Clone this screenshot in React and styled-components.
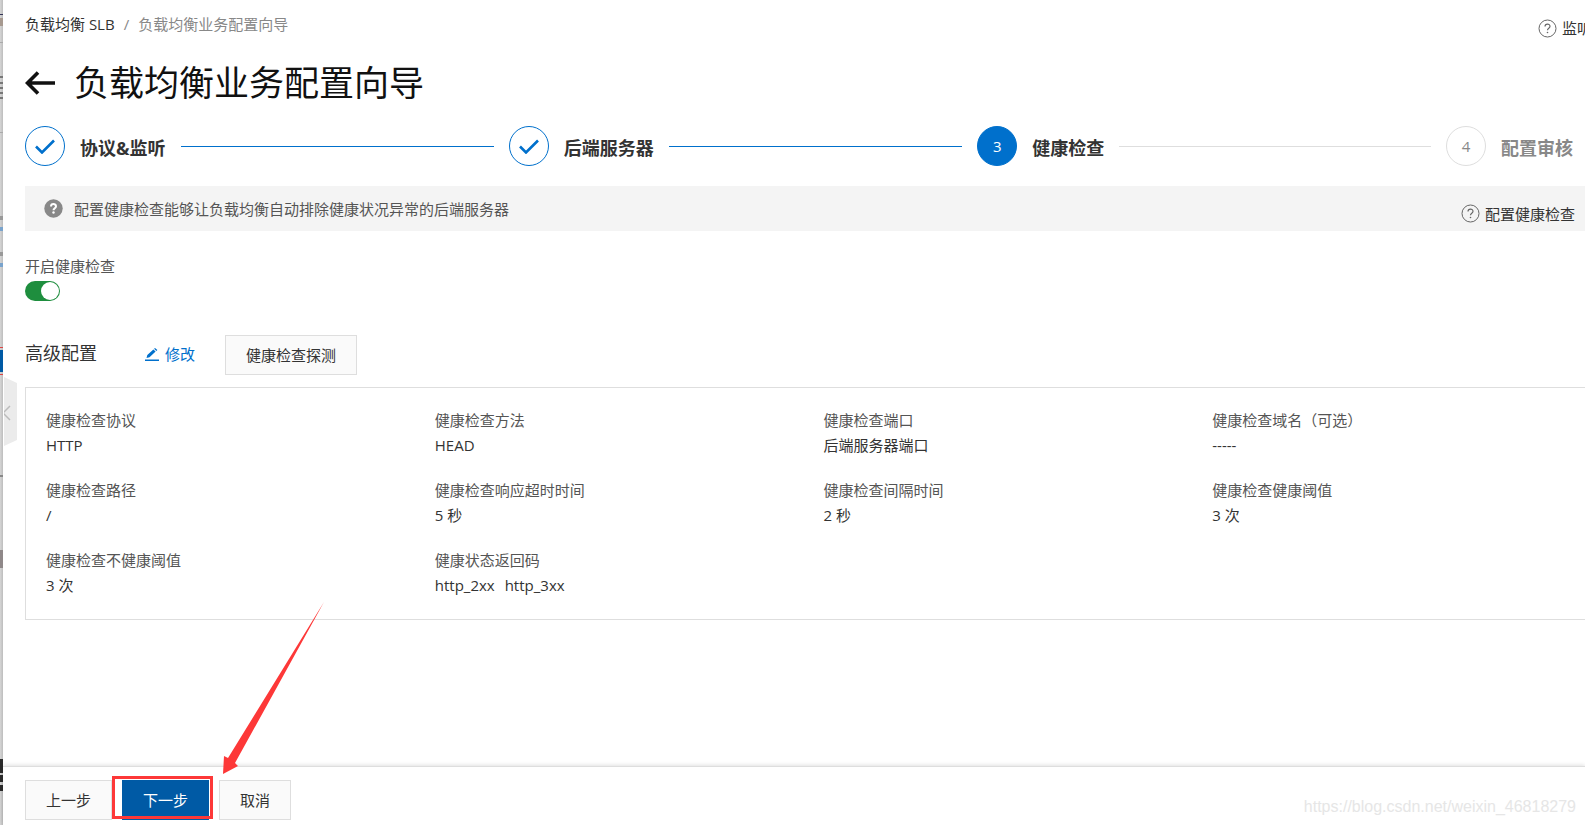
import styled, { createGlobalStyle } from "styled-components";

const GlobalStyle = createGlobalStyle`
  * {
    box-sizing: border-box;
  }

  body {
    margin: 0;
    background: #fff;
    color: #333;
    font-family: "Open Sans", "Noto Sans CJK SC", sans-serif;
    font-size: 15px;
    line-height: 20px;
    overflow: hidden;
  }

  button {
    font: inherit;
  }
`;

const Shell = styled.div`
  position: relative;
  display: flex;
  height: 100vh;
  overflow: hidden;
`;

const Underlay = styled.div`
  flex: none;
  width: 3px;
  background: linear-gradient(to right, #d6d6d6, #bdbdbd);
  display: flex;
  flex-direction: column;
`;

const Mark = styled.span`
  height: ${(props) => props.$height}px;
  margin-top: ${(props) => props.$gap}px;
  background: ${(props) => props.$color};
`;

const Panel = styled.div`
  flex: 1;
  min-width: 0;
  display: flex;
  flex-direction: column;
  background: #fff;
`;

const Content = styled.main`
  flex: 1;
  padding: 14px 0 0 22px;
`;

const TopBar = styled.div`
  display: flex;
  justify-content: space-between;
`;

const Breadcrumb = styled.nav`
  display: flex;
  gap: 9px;
  color: #888;

  a {
    color: #333;
    text-decoration: none;
  }
`;

const HelpLink = styled.a`
  display: flex;
  align-items: center;
  gap: 5px;
  color: #333;
  text-decoration: none;
  white-space: nowrap;

  svg {
    flex: none;
  }
`;

const TopHelp = styled(HelpLink)`
  width: 47px;
  height: 26px;
  padding-top: 2px;
  overflow: hidden;
`;

const TitleRow = styled.div`
  display: flex;
  align-items: center;
  gap: 19px;
  margin-top: 18px;
`;

const BackButton = styled.button`
  display: flex;
  padding: 0;
  border: 0;
  background: none;
`;

const Title = styled.h1`
  margin: 0;
  color: #111;
  font-size: 35px;
  font-weight: 400;
  line-height: 50px;
`;

const Steps = styled.ol`
  display: flex;
  gap: 15px;
  margin: 18px 12px 0 0;
  padding: 0;
  list-style: none;
`;

const Step = styled.li`
  display: flex;
  align-items: center;
  flex: 1 1 0;
  gap: 15px;

  &:first-child {
    flex-basis: 15px;
  }

  &:last-child {
    flex: none;
  }
`;

const StepCircle = styled.span`
  flex: none;
  display: flex;
  align-items: center;
  justify-content: center;
  width: 40px;
  height: 40px;
  border: 1px solid ${(props) => (props.$state === "wait" ? "#dedede" : "#0070cc")};
  border-radius: 50%;
  background: ${(props) => (props.$state === "active" ? "#0070cc" : "#fff")};
  color: ${(props) => (props.$state === "active" ? "#fff" : "#888")};
`;

const StepName = styled.span`
  padding-top: 4px;
  color: ${(props) => (props.$state === "wait" ? "#888" : "#333")};
  font-size: 18px;
  font-weight: 700;
  white-space: nowrap;
`;

const StepLine = styled.span`
  flex: 1;
  height: 1px;
  background: ${(props) => (props.$done ? "#0070cc" : "#dedede")};
`;

const Notice = styled.div`
  display: flex;
  align-items: center;
  gap: 11px;
  height: 45px;
  margin-top: 20px;
  padding: 0 10px 0 19px;
  background: #f4f4f4;
  color: #555;
`;

const NoticeHelp = styled(HelpLink)`
  margin-left: auto;
  padding-top: 10px;
`;

const SwitchField = styled.label`
  display: flex;
  flex-direction: column;
  align-items: flex-start;
  gap: 5px;
  margin-top: 25px;
  color: #555;
`;

const Switch = styled.input`
  appearance: none;
  display: flex;
  justify-content: flex-end;
  width: 35px;
  height: 20px;
  margin: 0;
  padding: 1px;
  border-radius: 10px;
  background: #1e8e3e;

  &::before {
    content: "";
    width: 18px;
    height: 18px;
    border-radius: 50%;
    background: #fff;
  }
`;

const SectionHead = styled.div`
  display: flex;
  align-items: center;
  margin-top: 34px;
`;

const SectionTitle = styled.h2`
  margin: 0 48px 5px 0;
  font-size: 18px;
  font-weight: 400;
`;

const EditButton = styled.button`
  display: flex;
  align-items: center;
  gap: 6px;
  margin-right: 30px;
  padding: 0 0 2px;
  border: 0;
  background: none;
  color: #0070cc;
`;

const Button = styled.button`
  height: 40px;
  padding: 0 20px 1px;
  border: 1px solid ${(props) => (props.$primary ? "#005aa5" : "#dedede")};
  background: ${(props) => (props.$primary ? "#005aa5" : "#fafafa")};
  color: ${(props) => (props.$primary ? "#fff" : "#333")};
`;

const Details = styled.dl`
  display: grid;
  grid-template-columns: repeat(4, 1fr);
  row-gap: 25px;
  margin: 12px -16px 0 0;
  padding: 22px 0 24px 20px;
  border: 1px solid #dedede;
  border-right: 0;
`;

const Detail = styled.div`
  dt {
    color: #555;
  }

  dd {
    display: flex;
    gap: 10px;
    margin: 5px 0 0;
  }
`;

const Footer = styled.footer`
  display: flex;
  gap: 10px;
  padding: 13px 0 5px 22px;
  border-top: 1px solid #dedede;
  box-shadow: 0 -1px 4px rgba(0, 0, 0, 0.12);
`;

const Highlight = styled.div`
  position: relative;

  &::after {
    content: "";
    position: absolute;
    inset: -4px -4px 1px -10px;
    border: 3px solid #fd3838;
    pointer-events: none;
  }
`;

const Arrow = styled.svg`
  position: absolute;
  left: 101px;
  bottom: 46px;
`;

const CollapseTab = styled.button`
  position: absolute;
  left: 4px;
  top: 377px;
  padding: 0;
  border: 0;
  background: none;
`;

const Watermark = styled.span`
  position: absolute;
  right: 9px;
  bottom: 8px;
  color: #e6e6e6;
  font-family: "Liberation Sans", sans-serif;
  font-size: 16px;
`;

const steps = [
  { name: "协议&监听", state: "done" },
  { name: "后端服务器", state: "done" },
  { name: "健康检查", state: "active" },
  { name: "配置审核", state: "wait" },
];

const details = [
  { label: "健康检查协议", values: ["HTTP"] },
  { label: "健康检查方法", values: ["HEAD"] },
  { label: "健康检查端口", values: ["后端服务器端口"] },
  { label: "健康检查域名（可选）", values: ["-----"] },
  { label: "健康检查路径", values: ["/"] },
  { label: "健康检查响应超时时间", values: ["5 秒"] },
  { label: "健康检查间隔时间", values: ["2 秒"] },
  { label: "健康检查健康阈值", values: ["3 次"] },
  { label: "健康检查不健康阈值", values: ["3 次"] },
  { label: "健康状态返回码", values: ["http_2xx", "http_3xx"] },
];

// slivers of the page that shows behind the panel, top to bottom
const marks = [
  { gap: 14, height: 1, color: "#335" },
  { gap: 3, height: 8, color: "#a79a90" },
  { gap: 16, height: 1, color: "#aaa" },
  { gap: 33, height: 2, color: "#777" },
  { gap: 4, height: 2, color: "#777" },
  { gap: 3, height: 2, color: "#777" },
  { gap: 3, height: 2, color: "#777" },
  { gap: 3, height: 2, color: "#777" },
  { gap: 33, height: 1, color: "#aaa" },
  { gap: 83, height: 4, color: "#999" },
  { gap: 7, height: 4, color: "#79a3cc" },
  { gap: 21, height: 4, color: "#999" },
  { gap: 7, height: 4, color: "#79a3cc" },
  { gap: 80, height: 1, color: "#d44" },
  { gap: 2, height: 22, color: "#005aa5" },
  { gap: 2, height: 1, color: "#d44" },
  { gap: 100, height: 2, color: "#888" },
  { gap: 73, height: 18, color: "#8f8889" },
  { gap: 191, height: 14, color: "#2b2b2b" },
  { gap: 2, height: 7, color: "#2b2b2b" },
  { gap: 3, height: 6, color: "#2b2b2b" },
];

const QuestionIcon = ({ solid }) => (
  <svg width="19" height="19" viewBox="0 0 19 19" fill="none" aria-hidden="true">
    <circle
      cx="9.5"
      cy="9.5"
      r={solid ? 9.2 : 8.5}
      fill={solid ? "#888" : "none"}
      stroke={solid ? "none" : "#666"}
    />
    <path
      d="M7 7.4C7 4.3 12 4.3 12 7.3C12 9.2 9.5 9.2 9.5 11.2"
      stroke={solid ? "#fff" : "#666"}
      strokeWidth={solid ? 2 : 1.2}
    />
    <circle cx="9.5" cy="13.5" r={solid ? 1.2 : 0.8} fill={solid ? "#fff" : "#666"} />
  </svg>
);

const CheckIcon = () => (
  <svg width="20" height="16" viewBox="0 0 20 16" fill="none" aria-hidden="true">
    <path d="M1 8.5L7 14.5L19 2.5" stroke="#0070cc" strokeWidth="2.6" />
  </svg>
);

const renderStepMark = (state, number) => (state === "done" ? <CheckIcon /> : number);

export default function App() {
  return (
    <>
      <GlobalStyle />
      <Shell lang="zh-CN">
        <Underlay>
          {marks.map((mark, index) => (
            <Mark key={index} $gap={mark.gap} $height={mark.height} $color={mark.color} />
          ))}
        </Underlay>
        <Panel>
          <Content>
            <TopBar>
              <Breadcrumb>
                <a href="#slb">负载均衡 SLB</a>
                <span>/</span>
                <span>负载均衡业务配置向导</span>
              </Breadcrumb>
              <TopHelp href="#listener">
                <QuestionIcon />
                监听
              </TopHelp>
            </TopBar>
            <TitleRow>
              <BackButton aria-label="返回">
                <svg width="30" height="24" viewBox="0 0 30 24" fill="none">
                  <path d="M13 1.5L2.5 12L13 22.5M2.5 12H30" stroke="#111" strokeWidth="3.6" />
                </svg>
              </BackButton>
              <Title>负载均衡业务配置向导</Title>
            </TitleRow>
            <Steps>
              {steps.map(({ name, state }, index) => (
                <Step key={name}>
                  <StepCircle $state={state}>{renderStepMark(state, index + 1)}</StepCircle>
                  <StepName $state={state}>{name}</StepName>
                  {index < steps.length - 1 && <StepLine $done={state === "done"} />}
                </Step>
              ))}
            </Steps>
            <Notice>
              <QuestionIcon solid />
              <span>配置健康检查能够让负载均衡自动排除健康状况异常的后端服务器</span>
              <NoticeHelp href="#health-check">
                <QuestionIcon />
                配置健康检查
              </NoticeHelp>
            </Notice>
            <SwitchField>
              开启健康检查
              <Switch type="checkbox" role="switch" defaultChecked />
            </SwitchField>
            <SectionHead>
              <SectionTitle>高级配置</SectionTitle>
              <EditButton>
                <svg width="14" height="13" viewBox="0 0 14 13" fill="#0070cc" aria-hidden="true">
                  <path d="M0 11.5H14V13H0ZM1.5 10L2.3 7L8.4 1.4L10.6 3.6L4.5 9.3ZM9.1 0.8L10 0L12.4 2L11.3 3Z" />
                </svg>
                修改
              </EditButton>
              <Button>健康检查探测</Button>
            </SectionHead>
            <Details>
              {details.map(({ label, values }) => (
                <Detail key={label}>
                  <dt>{label}</dt>
                  <dd>
                    {values.map((value) => (
                      <span key={value}>{value}</span>
                    ))}
                  </dd>
                </Detail>
              ))}
            </Details>
          </Content>
          <Footer>
            <Button>上一步</Button>
            <Highlight>
              <Button $primary>下一步</Button>
              <Arrow width="104" height="172" viewBox="0 0 104 172" aria-hidden="true">
                <path d="M101 0L12 161L15 164L0 172L1 154L5 156Z" fill="#fd3838" />
              </Arrow>
            </Highlight>
            <Button>取消</Button>
          </Footer>
        </Panel>
        <CollapseTab aria-label="收起">
          <svg width="13" height="70" viewBox="0 0 13 70" fill="none">
            <path d="M0 0L13 6V63L0 69Z" fill="#ebebeb" />
            <path d="M6 29L-1 36L6 43" stroke="#bbb" strokeWidth="1.5" />
          </svg>
        </CollapseTab>
        <Watermark>https://blog.csdn.net/weixin_46818279</Watermark>
      </Shell>
    </>
  );
}
